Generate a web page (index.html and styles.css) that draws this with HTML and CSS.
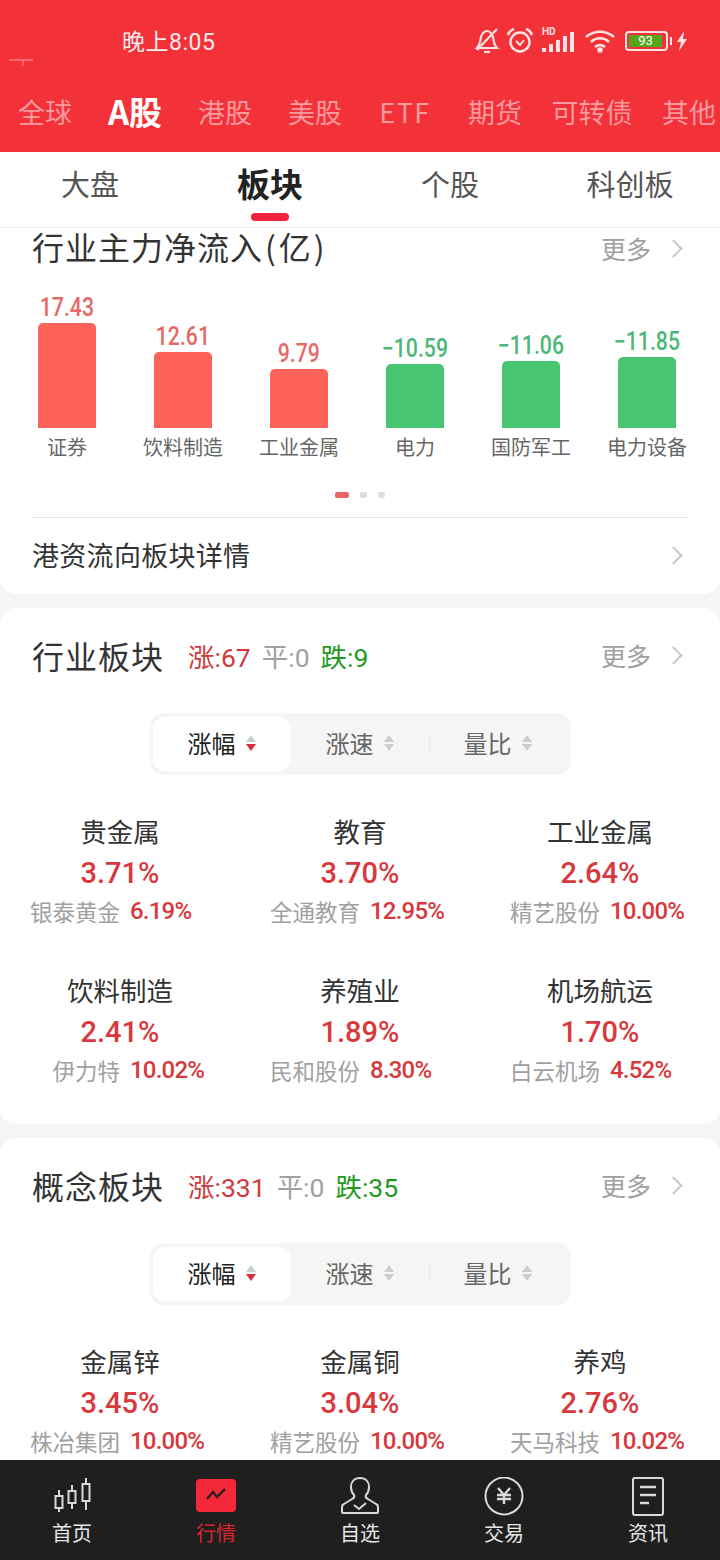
FILE: index.html
```html
<!DOCTYPE html>
<html lang="zh-CN">
<head>
  <meta charset="utf-8">
  <title>行情</title>
  <link rel="stylesheet" href="styles.css">
</head>
<body>
<div id="root">

  <div class="top">
    <div class="status">
      <span class="time">晚上8:05</span>
      <div class="status-icons">
        <svg class="ic-bell" width="26" height="28" viewBox="0 0 26 28" fill="none" stroke="#fbe3e4" stroke-width="2.2">
          <path d="M3 21c3-3 3-6 4-11 1-4 4-6 6-6s5 2 6 6c1 5 1 8 4 11z"/>
          <path d="M10 25h6"/>
          <path d="M3 23 23 2"/>
        </svg>
        <svg class="ic-alarm" width="28" height="28" viewBox="0 0 28 28" fill="none" stroke="#fbe3e4" stroke-width="2.4">
          <circle cx="14" cy="15" r="9.5"/>
          <path d="M2 8c1-3 3-5 6-6M26 8c-1-3-3-5-6-6"/>
          <path d="M10 14l4 4 4-5" stroke-width="2"/>
        </svg>
        <div class="signal">
          <span class="hd">HD</span>
          <svg width="34" height="22" viewBox="0 0 34 22" fill="#fbe3e4">
            <rect x="0" y="17" width="4" height="4"/>
            <rect x="7" y="13" width="4" height="8"/>
            <rect x="14" y="9" width="4" height="12"/>
            <rect x="21" y="5" width="4" height="16"/>
            <rect x="28" y="1" width="4" height="20"/>
          </svg>
        </div>
        <svg class="ic-wifi" width="32" height="24" viewBox="0 0 32 24" fill="none" stroke="#fbe3e4" stroke-width="2.6">
          <path d="M2 8c8-7 20-7 28 0"/>
          <path d="M7 13c5-5 13-5 18 0"/>
          <path d="M11 18c3-2.500 7-2.500 10 0"/>
          <circle cx="16" cy="21" r="1.500" fill="#fbe3e4"/>
        </svg>
        <div class="battery"><span class="level">93</span></div>
        <svg class="ic-bolt" width="12" height="20" viewBox="0 0 12 20" fill="#fbe3e4">
          <path d="M8 0 1 11h4l-2 9 8-12H7z"/>
        </svg>
      </div>
    </div>
    <div class="market-tabs">
      <span>全球</span>
      <span class="on">A股</span>
      <span>港股</span>
      <span>美股</span>
      <span class="latin">ETF</span>
      <span>期货</span>
      <span class="wide">可转债</span>
      <span>其他</span>
    </div>
    <svg class="stray" width="26" height="8" viewBox="0 0 26 8" fill="none" stroke="#f9a0a4" stroke-width="1">
      <path d="M1 1h24M15 1v6"/>
    </svg>
  </div>

  <div class="sub-tabs">
    <span>大盘</span>
    <span class="on">板块</span>
    <span>个股</span>
    <span>科创板</span>
  </div>

  <div class="content">

    <div class="card card-flow">
      <div class="flow-head">
        <span class="title">行业主力净流入<span class="paren">(</span>亿<span class="paren">)</span></span>
        <span class="more">更多<i class="chev"></i></span>
      </div>
      <div class="chart">
        <div class="col"><span class="val up">17.43</span><div class="bar bar-up" style="height:105px"></div><span class="lab">证券</span></div>
        <div class="col"><span class="val up">12.61</span><div class="bar bar-up" style="height:76px"></div><span class="lab">饮料制造</span></div>
        <div class="col"><span class="val up">9.79</span><div class="bar bar-up" style="height:59px"></div><span class="lab">工业金属</span></div>
        <div class="col"><span class="val down">−10.59</span><div class="bar bar-down" style="height:64px"></div><span class="lab">电力</span></div>
        <div class="col"><span class="val down">−11.06</span><div class="bar bar-down" style="height:67px"></div><span class="lab">国防军工</span></div>
        <div class="col"><span class="val down">−11.85</span><div class="bar bar-down" style="height:71px"></div><span class="lab">电力设备</span></div>
      </div>
      <div class="dots"><i class="dot on"></i><i class="dot"></i><i class="dot"></i></div>
      <div class="link-row">
        <span>港资流向板块详情</span>
        <i class="chev"></i>
      </div>
    </div>

    <div class="card">
      <div class="sec-head">
        <span class="title">行业板块</span>
        <span class="count red">涨:67</span>
        <span class="count gray">平:0</span>
        <span class="count green">跌:9</span>
        <span class="more">更多<i class="chev"></i></span>
      </div>
      <div class="seg">
        <div class="seg-item on">涨幅<i class="sort"></i></div>
        <div class="seg-item">涨速<i class="sort"></i></div>
        <div class="seg-item">量比<i class="sort"></i></div>
      </div>
      <div class="grid">
        <div class="cell"><div class="name">贵金属</div><div class="pct">3.71%</div><div class="lead"><span>银泰黄金</span><b>6.19%</b></div></div>
        <div class="cell"><div class="name">教育</div><div class="pct">3.70%</div><div class="lead"><span>全通教育</span><b>12.95%</b></div></div>
        <div class="cell"><div class="name">工业金属</div><div class="pct">2.64%</div><div class="lead"><span>精艺股份</span><b>10.00%</b></div></div>
        <div class="cell"><div class="name">饮料制造</div><div class="pct">2.41%</div><div class="lead"><span>伊力特</span><b>10.02%</b></div></div>
        <div class="cell"><div class="name">养殖业</div><div class="pct">1.89%</div><div class="lead"><span>民和股份</span><b>8.30%</b></div></div>
        <div class="cell"><div class="name">机场航运</div><div class="pct">1.70%</div><div class="lead"><span>白云机场</span><b>4.52%</b></div></div>
      </div>
    </div>

    <div class="card">
      <div class="sec-head">
        <span class="title">概念板块</span>
        <span class="count red">涨:331</span>
        <span class="count gray">平:0</span>
        <span class="count green">跌:35</span>
        <span class="more">更多<i class="chev"></i></span>
      </div>
      <div class="seg">
        <div class="seg-item on">涨幅<i class="sort"></i></div>
        <div class="seg-item">涨速<i class="sort"></i></div>
        <div class="seg-item">量比<i class="sort"></i></div>
      </div>
      <div class="grid">
        <div class="cell"><div class="name">金属锌</div><div class="pct">3.45%</div><div class="lead"><span>株冶集团</span><b>10.00%</b></div></div>
        <div class="cell"><div class="name">金属铜</div><div class="pct">3.04%</div><div class="lead"><span>精艺股份</span><b>10.00%</b></div></div>
        <div class="cell"><div class="name">养鸡</div><div class="pct">2.76%</div><div class="lead"><span>天马科技</span><b>10.02%</b></div></div>
      </div>
    </div>

  </div>

  <div class="nav">
    <div class="nav-item">
      <svg width="40" height="40" viewBox="0 0 40 40" fill="none" stroke="#d8d8d8" stroke-width="2">
        <rect x="3.500" y="19" width="7" height="12"/><path d="M7 13v6M7 31v4"/>
        <rect x="16.500" y="14" width="7" height="12"/><path d="M20 8v6M20 26v6"/>
        <rect x="30.500" y="7" width="7" height="17"/><path d="M34 1v6M34 24v9"/>
      </svg>
      <span>首页</span>
    </div>
    <div class="nav-item on">
      <svg width="40" height="40" viewBox="0 0 40 40" fill="none">
        <rect x="0" y="2" width="40" height="33" rx="4" fill="#f5283a"/>
        <path d="M11 22l6-7 4 5 8-8" stroke="#1f1f1f" stroke-width="2.200"/>
      </svg>
      <span>行情</span>
    </div>
    <div class="nav-item">
      <svg width="40" height="40" viewBox="0 0 40 40" fill="none" stroke="#d8d8d8" stroke-width="2">
        <path d="M20 1c-6 0-9 4-9 9 0 4 1 6 3 8 1 2 0 3-2 4l-8 5c-2 1-2 2-2 3v5c0 1 1 1 1 1h34c1 0 1-1 1-1v-5c0-1 0-2-2-3l-8-5c-2-1-3-2-2-4 2-2 3-4 3-8 0-5-3-9-9-9z"/>
        <path d="M14 28l5 4 7-6"/>
      </svg>
      <span>自选</span>
    </div>
    <div class="nav-item">
      <svg width="40" height="40" viewBox="0 0 40 40" fill="none" stroke="#d8d8d8" stroke-width="2">
        <circle cx="20" cy="19" r="18.500"/>
        <path d="M14 11l6 7 6-7M13 18h14M13 22h14M20 18v9" stroke-width="2.400"/>
      </svg>
      <span>交易</span>
    </div>
    <div class="nav-item">
      <svg width="40" height="40" viewBox="0 0 40 40" fill="none" stroke="#d8d8d8" stroke-width="2">
        <rect x="5" y="1" width="30" height="37" rx="2"/>
        <path d="M12 10h16M12 18h16M12 26h9" stroke-width="2.400"/>
      </svg>
      <span>资讯</span>
    </div>
  </div>

</div>
</body>
</html>
```

FILE: styles.css
```css
* {
  box-sizing: border-box;
}
body {
  margin: 0;
  font-family: "Noto Sans CJK SC", "Noto Sans", sans-serif;
  background-color: #f5f5f5;
}
i {
  font-style: normal;
}
#root {
  width: 720px;
  height: 1560px;
  display: flex;
  flex-direction: column;
  overflow: hidden;
}

/* red header */
.top {
  position: relative;
  z-index: 1;
  height: 152px;
  flex: none;
  background-color: #f33139;
  color: #ffffff;
}
.status {
  height: 80px;
  display: flex;
  align-items: center;
  justify-content: space-between;
  padding: 0 32px 0 122px;
}
.time {
  font-size: 23px;
  letter-spacing: 0.5px;
  font-family: "Roboto", "Noto Sans CJK SC", sans-serif;
  color: #fbeaea;
}
.status-icons {
  display: flex;
  align-items: center;
  gap: 8px;
  margin-top: 2px;
}
.ic-bell {
  margin-right: -2px;
}
.signal {
  position: relative;
  width: 34px;
  height: 24px;
  display: flex;
  align-items: flex-end;
}
.hd {
  position: absolute;
  left: 0;
  top: -3px;
  font-size: 10px;
  line-height: 12px;
  font-weight: 700;
  font-family: "Roboto", sans-serif;
  color: #fbe3e4;
}
.battery {
  position: relative;
  width: 43px;
  height: 20px;
  margin-left: 1px;
  border: 2px solid #fbe3e4;
  border-radius: 4px;
  padding: 2px;
}
.battery::after {
  content: "";
  position: absolute;
  right: -6px;
  top: 4px;
  width: 2px;
  height: 8px;
  background-color: #fbe3e4;
}
.level {
  display: block;
  height: 12px;
  width: 33px;
  background-color: #56a61c;
  font-size: 13px;
  line-height: 12px;
  text-align: center;
  font-family: "Roboto", sans-serif;
  color: #ffffff;
}
.market-tabs {
  display: flex;
  align-items: center;
  height: 62px;
  font-size: 27px;
  color: #f99a9e;
}
.market-tabs span {
  flex: none;
  width: 90px;
  text-align: center;
  white-space: nowrap;
}
.market-tabs .wide {
  width: 104px;
}
.market-tabs .on {
  font-size: 33px;
  font-weight: 700;
  color: #ffffff;
}
.market-tabs .latin {
  letter-spacing: 1.5px;
}
.stray {
  position: absolute;
  left: 8px;
  top: 59px;
}

/* sub tabs */
.sub-tabs {
  position: relative;
  z-index: 1;
  flex: none;
  height: 76px;
  display: grid;
  grid-template-columns: repeat(4, 1fr);
  align-items: center;
  justify-items: center;
  background-color: #ffffff;
  border-bottom: 1px solid #eeeeee;
  font-size: 29px;
  color: #555555;
  padding-bottom: 14px;
}
.sub-tabs .on {
  position: relative;
  font-size: 33px;
  font-weight: 700;
  color: #222222;
}
.sub-tabs .on::after {
  content: "";
  position: absolute;
  left: 14px;
  bottom: -14px;
  width: 38px;
  height: 8px;
  border-radius: 4px;
  background-color: #f0243a;
}

.content {
  flex: 1;
  min-height: 0;
  display: flex;
  flex-direction: column;
  gap: 14px;
}
.card {
  flex: none;
  background-color: #ffffff;
  border-radius: 16px;
}
.title {
  font-size: 32px;
  letter-spacing: 1px;
  line-height: 42px;
  color: #333333;
}
.paren {
  margin: 0 2px;
}
.more {
  margin-left: auto;
  display: flex;
  align-items: center;
  font-size: 25px;
  color: #a0a0a0;
}
.chev {
  display: block;
  width: 13px;
  height: 13px;
  margin-left: 16px;
  margin-right: 8px;
  border-top: 2px solid #c8c8c8;
  border-right: 2px solid #c8c8c8;
  transform: rotate(45deg);
}

/* flow chart card */
.card-flow {
  height: 366px;
  border-radius: 0 0 16px 16px;
}
.flow-head {
  display: flex;
  align-items: center;
  height: 36px;
  padding: 0 32px;
}
.flow-head .more {
  margin-top: 4px;
}
.chart {
  height: 217px;
  margin-top: -15px;
  padding-left: 9px;
  display: flex;
  align-items: flex-end;
}
.col {
  width: 116px;
  height: 217px;
  display: flex;
  flex-direction: column;
  align-items: center;
  justify-content: flex-end;
}
.val {
  display: block;
  font-family: "Roboto", sans-serif;
  font-weight: 500;
  font-size: 25px;
  line-height: 30px;
  transform: scaleX(0.85);
}
.val.up {
  color: #e56a66;
}
.val.down {
  color: #4cb877;
}
.bar {
  width: 58px;
  border-radius: 5px 5px 0 0;
}
.bar-up {
  background-color: #ff6259;
}
.bar-down {
  background-color: #47c570;
}
.lab {
  font-size: 20px;
  line-height: 38px;
  height: 38px;
  white-space: nowrap;
  color: #666666;
}
.dots {
  display: flex;
  justify-content: center;
  gap: 11px;
  margin-top: 26px;
}
.dot {
  width: 7px;
  height: 6px;
  border-radius: 2px;
  background-color: #dddddd;
}
.dot.on {
  width: 14px;
  background-color: #e8686a;
}
.link-row {
  display: flex;
  align-items: center;
  justify-content: space-between;
  margin: 19px 32px 0;
  padding-top: 17px;
  border-top: 1px solid #e6e6e6;
  font-size: 27px;
  letter-spacing: 0.3px;
  line-height: 40px;
  color: #333333;
}

/* board cards */
.sec-head {
  display: flex;
  align-items: center;
  height: 42px;
  margin-top: 26px;
  padding: 0 32px;
}
.count {
  font-size: 26.500px;
  font-family: "Roboto", "Noto Sans CJK SC", sans-serif;
  margin-left: 11px;
}
.title + .count {
  margin-left: 24px;
}
.count.red {
  color: #cf3a3c;
}
.count.gray {
  color: #a0a0a0;
}
.count.green {
  color: #1f991f;
}
.seg {
  width: 421px;
  height: 62px;
  margin: 37px auto 0;
  padding: 4px 3px;
  display: flex;
  background-color: #f5f5f5;
  border-radius: 14px;
}
.seg-item {
  position: relative;
  width: 138px;
  padding-bottom: 3px;
  display: flex;
  align-items: center;
  justify-content: center;
  font-size: 24px;
  color: #666666;
  border-radius: 12px;
}
.seg-item.on {
  background-color: #ffffff;
  color: #222222;
}
.seg-item:last-child::before {
  content: "";
  position: absolute;
  left: 0;
  top: 17px;
  width: 1px;
  height: 20px;
  background-color: #ececec;
}
.sort {
  display: flex;
  flex-direction: column;
  gap: 2px;
  margin-left: 10px;
}
.sort::before,
.sort::after {
  content: "";
  width: 0;
  height: 0;
  border-left: 5.500px solid transparent;
  border-right: 5.500px solid transparent;
}
.sort::before {
  border-bottom: 7px solid #cccccc;
}
.sort::after {
  border-top: 7px solid #cccccc;
}
.seg-item.on .sort::before {
  border-bottom-color: #c4d2ce;
}
.seg-item.on .sort::after {
  border-top-color: #d6303c;
}
.grid {
  display: grid;
  grid-template-columns: repeat(3, 240px);
  grid-auto-rows: 159px;
  padding-top: 36px;
  margin-bottom: -5px;
}
.cell {
  text-align: center;
  white-space: nowrap;
}
.name {
  font-size: 26.500px;
  line-height: 40px;
  color: #333333;
}
.pct {
  font-family: "Roboto", sans-serif;
  font-weight: 500;
  font-size: 29px;
  line-height: 42px;
  margin-top: 1px;
  color: #d8393d;
}
.lead {
  display: flex;
  margin-top: -1px;
  font-size: 22.500px;
  line-height: 36px;
  color: #a0a0a0;
}
.lead span {
  width: 120px;
  text-align: right;
}
.lead b {
  font-family: "Roboto", sans-serif;
  font-weight: 500;
  font-size: 24px;
  letter-spacing: -0.8px;
  margin-left: 10px;
  color: #d8393d;
}

/* bottom nav */
.nav {
  position: relative;
  z-index: 1;
  flex: none;
  height: 100px;
  display: grid;
  grid-template-columns: repeat(5, 144px);
  background-color: #1f1f1f;
  padding-top: 17px;
}
.nav-item {
  display: flex;
  flex-direction: column;
  align-items: center;
  font-size: 20px;
  line-height: 28px;
  color: #e6e6e6;
}
.nav-item span {
  margin-top: 2px;
}
.nav-item.on {
  color: #d8262f;
}
```
